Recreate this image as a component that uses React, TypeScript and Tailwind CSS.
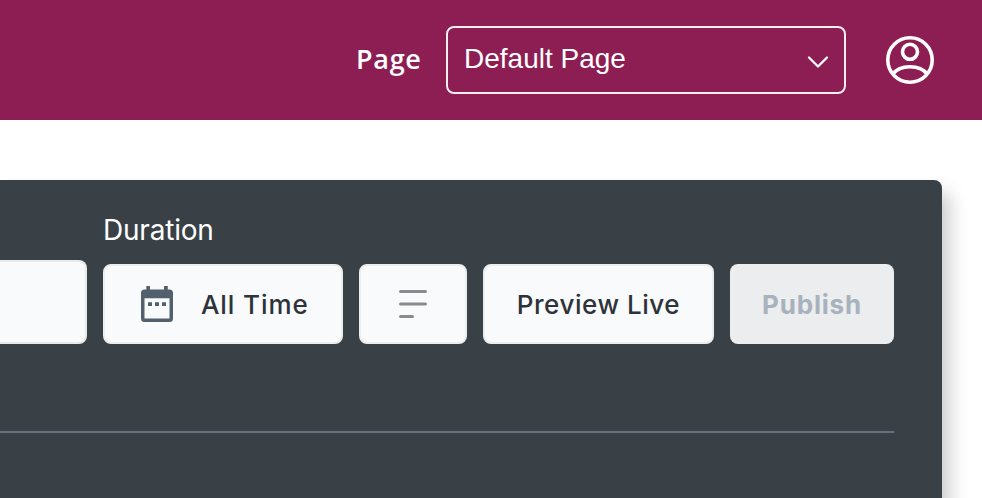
import React from "react";

const buttonBase =
  "flex h-20 shrink-0 items-center rounded-lg border-2 border-[#ebeef0] bg-[#f9fafc] text-[#2d3338]";

function CalendarIcon() {
  return (
    <svg width="32" height="36" viewBox="0 0 32 36" className="block shrink-0" fill="#52606d">
      <path
        fillRule="evenodd"
        d="M5.3 0H9V3.4H23V0H26.8V3.4H28.5A3.5 3.5 0 0 1 32 6.900V32.500A3.500 3.500 0 0 1 28.500 36H3.500A3.500 3.500 0 0 1 0 32.500V6.900A3.500 3.500 0 0 1 3.500 3.400H5.300ZM3.500 12.300V32.500H28.500V12.300Z"
      />
      <path d="M7 16.300h4v3.700H7zM14 16.300h4v3.700h-4zM21 16.300h4v3.700h-4z" />
    </svg>
  );
}

function LinesIcon() {
  return (
    <svg width="28" height="28" viewBox="0 0 28 28" className="block" stroke="#898b91" strokeWidth="3" strokeLinecap="round">
      <path d="M1.500 1.500H26.500M1.500 14H26.500M1.500 26.500H13.500" />
    </svg>
  );
}

function AccountIcon() {
  return (
    <svg width="48" height="48" viewBox="0 0 48 48" className="block shrink-0" fill="none" stroke="#fff" strokeWidth="3.600">
      <circle cx="24" cy="24" r="22.200" />
      <circle cx="24" cy="15.800" r="7.500" />
      <path d="M7 38C10.500 33 17 30.700 24 30.700S37.500 33 41 38" />
    </svg>
  );
}

export default function App() {
  return (
    <div className="h-[498px] w-[982px] overflow-hidden bg-white font-['Inter',sans-serif]">
      <header className="flex h-[120px] items-center justify-end bg-[#8d1e53] pr-12 text-white">
        <span className="-mt-0.5 mr-6 w-[66px] whitespace-nowrap font-['Open_Sans',sans-serif] text-[27px] leading-8 font-semibold tracking-[0.700px]">
          Page
        </span>
        <div className="mr-10 flex h-[68px] w-[400px] items-center justify-between rounded-lg border-2 border-[#f3edf0] pr-4 pl-4">
          <span className="-mt-0.5 font-['Liberation_Sans',sans-serif] text-[28px] leading-8">Default Page</span>
          <svg width="20" height="12" viewBox="0 0 20 12" className="mt-1 block overflow-visible" fill="none" stroke="#fff" strokeWidth="2.300" strokeLinecap="round" strokeLinejoin="round">
            <path d="M1 1.500L10 10.500L19 1.500" />
          </svg>
        </div>
        <AccountIcon />
      </header>

      <main className="pt-[60px] pr-10">
        <section className="h-[400px] rounded-tr-lg bg-[#394046] pt-8 pr-12 shadow-[8px_12px_18px_rgba(0,0,0,0.2)]">
          <div className="flex items-end gap-4">
            <div className="h-[84px] w-[87px] shrink-0 rounded-r-lg border-2 border-l-0 border-[#e6eaeb] bg-[#f9fafc]" />
            <div className="w-[240px] shrink-0">
              <div className="mb-4 text-[28px] leading-9 tracking-[-0.200px] whitespace-nowrap text-white">Duration</div>
              <button className={`${buttonBase} w-[240px] pl-9`}>
                <CalendarIcon />
                <span className="mt-0.5 ml-7 text-[26px] leading-8 font-medium tracking-[0.900px] whitespace-nowrap">All Time</span>
              </button>
            </div>
            <button className={`${buttonBase} w-[108px] justify-center`}>
              <LinesIcon />
            </button>
            <button className={`${buttonBase} w-[231px] justify-center`}>
              <span className="mt-0.5 text-[26px] leading-8 font-medium tracking-[0.550px] whitespace-nowrap">Preview Live</span>
            </button>
            <button className="flex h-20 w-[164px] shrink-0 items-center justify-center rounded-lg bg-[#ebedef] text-[#a8b2bc]">
              <span className="mt-0.5 text-[26px] leading-8 font-bold tracking-[0.800px] whitespace-nowrap">Publish</span>
            </button>
          </div>
          <div className="mt-[87px] h-0.5 bg-[#66727f]" />
        </section>
      </main>
    </div>
  );
}
